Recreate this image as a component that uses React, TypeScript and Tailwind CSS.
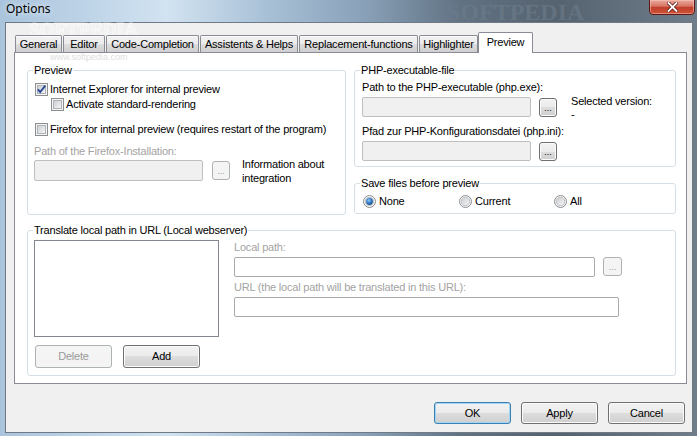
import type { ReactNode } from 'react'

// ── Win7 style controls ─────────────────────────────────────

const UI = "font-['Liberation_Sans',sans-serif] text-[11px] tracking-[-0.2px] leading-[13px]"

function CheckBox({ checked = false }: { checked?: boolean }) {
  return (
    <svg width="13" height="13" viewBox="0 0 13 13" className="shrink-0">
      <defs>
        <linearGradient id="cbFill" x1="0" y1="0" x2="1" y2="1">
          <stop offset="0" stopColor="#c9cdd3" />
          <stop offset="1" stopColor="#f7f7f7" />
        </linearGradient>
      </defs>
      <rect x="0.5" y="0.5" width="12" height="12" fill="#f4f4f4" stroke="#8e8f8f" />
      <rect x="2.5" y="2.5" width="8" height="8" fill="url(#cbFill)" stroke="#b0b4b9" />
      {checked && <path d="M2.8 6.3 L5.2 9 L10.3 2.6" fill="none" stroke="#2c4a94" strokeWidth="1.9" />}
    </svg>
  )
}

function Radio({ selected = false }: { selected?: boolean }) {
  return (
    <svg width="13" height="13" viewBox="0 0 13 13" className="shrink-0">
      <defs>
        <linearGradient id="rbFill" x1="0" y1="0" x2="1" y2="1">
          <stop offset="0" stopColor="#cbcfd4" />
          <stop offset="1" stopColor="#f6f6f6" />
        </linearGradient>
        <radialGradient id="rbDot" cx="0.4" cy="0.35" r="0.7">
          <stop offset="0" stopColor="#8ccaf7" />
          <stop offset="0.6" stopColor="#2d73c0" />
          <stop offset="1" stopColor="#1b4c8a" />
        </radialGradient>
      </defs>
      <circle cx="6.5" cy="6.5" r="6" fill="#f4f4f4" stroke="#8e8f8f" />
      <circle cx="6.5" cy="6.5" r="4.2" fill="url(#rbFill)" stroke="#b4b8bd" strokeWidth="0.8" />
      {selected && <circle cx="6.5" cy="6.5" r="3.4" fill="url(#rbDot)" />}
    </svg>
  )
}

function Btn({ children, className = '', disabled, isDefault }: { children: ReactNode; className?: string; disabled?: boolean; isDefault?: boolean }) {
  if (disabled) {
    return (
      <div className={`flex items-center justify-center rounded-[3px] border border-[#adb2b5] bg-[#f4f4f4] text-[#9a9a9a] ${className}`}>
        {children}
      </div>
    )
  }
  return (
    <div
      className={`flex items-center justify-center rounded-[3px] border bg-[linear-gradient(180deg,#f2f2f2_0%,#ebebeb_50%,#dddddd_50%,#cfcfcf_100%)] text-black ${
        isDefault ? 'border-[#3c7fb1] shadow-[inset_0_0_0_1px_#9fd6f5]' : 'border-[#707070] shadow-[inset_0_0_0_1px_#fbfbfb]'
      } ${className}`}
    >
      {children}
    </div>
  )
}

function Dots({ disabled, className = '' }: { disabled?: boolean; className?: string }) {
  return (
    <Btn disabled={disabled} className={`w-[18px] h-[19px] !items-end pb-[3px] text-[9px] leading-[9px] tracking-normal ${className}`}>
      ...
    </Btn>
  )
}

function Field({ className = '', disabled }: { className?: string; disabled?: boolean }) {
  return (
    <div
      className={`rounded-[2px] border ${disabled ? 'border-[#bfbfbf] bg-[#f0f0f0]' : 'border-[#aaaaaa] bg-white'} ${className}`}
    />
  )
}

function Group({ title, className = '', children }: { title: string; className?: string; children?: ReactNode }) {
  return (
    <div className={`relative rounded-[3px] border border-[#d5dfe5] whitespace-nowrap ${className}`}>
      <span className="absolute left-[5px] top-[-7px] bg-white px-px">{title}</span>
      {children}
    </div>
  )
}

const tabs = [
  { label: 'General', w: 'w-[47px]' },
  { label: 'Editor', w: 'w-[42px]' },
  { label: 'Code-Completion', w: 'w-[93px]' },
  { label: 'Assistents & Helps', w: 'w-[98px]' },
  { label: 'Replacement-functions', w: 'w-[119px]' },
  { label: 'Highlighter', w: 'w-[59px]' },
]

// ── Dialog ──────────────────────────────────────────────────

export default function App() {
  return (
    <div
      className={`relative w-[697px] h-[436px] overflow-hidden flex flex-col text-black bg-[linear-gradient(90deg,#a9c4dc_0%,#bdd3e7_12%,#d2e3f1_24%,#a9c1d7_38%,#8aa2b9_52%,#617283_66%,#55626f_80%,#6f7d8a_100%)] ${UI}`}
    >
      {/* title bar */}
      <div className="h-[22px] flex items-start justify-between shrink-0">
        <span className="ml-[6px] mt-px text-[12px] leading-[16px] tracking-normal font-['Noto_Sans',sans-serif] [text-shadow:0_0_6px_rgba(255,255,255,0.95)]">
          Options
        </span>
        <div className="mr-[2px] -mt-px w-[46px] h-[16px] rounded-b-[4px] border border-[#5e1a12] bg-[linear-gradient(180deg,#e9aa9e_0%,#d67362_45%,#c13f2b_52%,#cc5238_100%)] shadow-[inset_0_0_0_1px_rgba(255,200,190,0.5)] flex items-center justify-center">
          <svg width="11" height="10" viewBox="0 0 11 10">
            <path d="M1.5 1 L9.5 9 M9.5 1 L1.5 9" stroke="#5a1a10" strokeWidth="3.4" strokeLinecap="square" />
            <path d="M1.5 1 L9.5 9 M9.5 1 L1.5 9" stroke="#ffffff" strokeWidth="1.8" strokeLinecap="square" />
          </svg>
        </div>
      </div>

      {/* client area */}
      <div className="flex-1 ml-[5px] mr-[4px] mb-[3px] border border-[#6f7a86] bg-[#f0f0f0] flex flex-col pl-[8px] pt-[9px]">
        {/* tab strip */}
        <div className="relative z-10 flex items-end h-[20px] pl-px gap-px">
          {tabs.map((t) => (
            <div
              key={t.label}
              className={`${t.w} h-[17px] flex items-center justify-center whitespace-nowrap border border-b-0 border-[#898c95] rounded-t-[2px] bg-[linear-gradient(180deg,#f2f2f2_0%,#ebebeb_50%,#dddddd_50%,#cfcfcf_100%)] shadow-[inset_0_1px_0_#fcfcfc]`}
            >
              {t.label}
            </div>
          ))}
          <div className="w-[55px] h-[21px] -ml-px -mb-px flex items-start justify-center pt-[3px] border border-b-0 border-[#898c95] rounded-t-[2px] bg-white">
            Preview
          </div>
        </div>

        {/* tab page */}
        <div className="w-[673px] h-[332px] border border-[#898c95] bg-white pl-[12px] pt-[17px] flex flex-col">
          <div className="flex gap-[8px]">
            <Group title="Preview" className="w-[319px] h-[145px] pl-[7px] pt-[12px]">
              <div className="flex items-center gap-[2px] h-[13px]">
                <CheckBox checked />
                <span>Internet Explorer for internal preview</span>
              </div>
              <div className="flex items-center gap-[2px] h-[13px] mt-[2px] pl-[16px]">
                <CheckBox />
                <span>Activate standard-rendering</span>
              </div>
              <div className="flex items-center gap-[2px] h-[13px] mt-[12px]">
                <CheckBox />
                <span>Firefox for internal preview (requires restart of the program)</span>
              </div>
              <div className="mt-[9px] -ml-px text-[#a3a3a3]">Path of the Firefox-Installation:</div>
              <div className="flex items-start mt-[2px] -ml-px">
                <Field disabled className="w-[169px] h-[21px]" />
                <Dots disabled className="ml-[9px] mt-px" />
                <div className="ml-[12px] -mt-[3px] leading-[14px]">
                  Information about
                  <br />
                  integration
                </div>
              </div>
            </Group>

            <div className="w-[322px] flex flex-col gap-[16px]">
              <Group title="PHP-executable-file" className="h-[97px] pl-[7px] pt-[10px]">
                <div>Path to the PHP-executable (php.exe):</div>
                <div className="flex items-start mt-[3px]">
                  <Field disabled className="w-[169px] h-[20px]" />
                  <Dots className="ml-[8px] mt-px" />
                  <div className="ml-[14px] -mt-[2px]">
                    Selected version:
                    <br />-
                  </div>
                </div>
                <div className="mt-[4px]">Pfad zur PHP-Konfigurationsdatei (php.ini):</div>
                <div className="flex items-start mt-[3px]">
                  <Field disabled className="w-[169px] h-[20px]" />
                  <Dots className="ml-[8px] mt-px" />
                </div>
              </Group>

              <Group title="Save files before preview" className="h-[31px] pl-[8px] pt-[11px]">
                <div className="flex items-center h-[13px]">
                  <div className="w-[96px] flex items-center gap-[3px]">
                    <Radio selected />
                    <span>None</span>
                  </div>
                  <div className="w-[95px] flex items-center gap-[3px]">
                    <Radio />
                    <span>Current</span>
                  </div>
                  <div className="flex items-center gap-[3px]">
                    <Radio />
                    <span>All</span>
                  </div>
                </div>
              </Group>
            </div>
          </div>

          <Group title="Translate local path in URL (Local webserver)" className="mt-[15px] w-[649px] h-[146px] pl-[6px] pt-[9px] flex">
            <div className="w-[185px]">
              <div className="h-[97px] border border-[#828790] bg-white" />
              <div className="flex gap-[11px] mt-[8px] ml-px">
                <Btn disabled className="w-[77px] h-[23px]">
                  Delete
                </Btn>
                <Btn className="w-[77px] h-[23px]">Add</Btn>
              </div>
            </div>
            <div className="ml-[15px] pt-px">
              <div className="text-[#a3a3a3]">Local path:</div>
              <div className="flex items-start mt-[3px]">
                <Field className="w-[361px] h-[20px]" />
                <Dots disabled className="ml-[8px] w-[19px]" />
              </div>
              <div className="mt-[4px] text-[#a3a3a3]">URL (the local path will be translated in this URL):</div>
              <Field className="mt-[3px] w-[385px] h-[20px]" />
            </div>
          </Group>
        </div>

        {/* dialog buttons */}
        <div className="flex justify-end gap-[10px] mt-[18px] pr-[7px]">
          <Btn isDefault className="w-[77px] h-[22px]">
            OK
          </Btn>
          <Btn className="w-[77px] h-[22px]">Apply</Btn>
          <Btn className="w-[77px] h-[22px]">Cancel</Btn>
        </div>
      </div>

      {/* softpedia watermarks */}
      <span className="pointer-events-none absolute left-[29px] top-[24px] text-[19px] leading-[12px] tracking-normal font-bold font-['Liberation_Serif',serif] text-white/10 [-webkit-text-stroke:1px_rgba(255,255,255,0.55)]">
        SOFTPEDIA
      </span>
      <span className="pointer-events-none absolute left-[50px] top-[52px] text-[9px] leading-[10px] tracking-normal font-['Liberation_Sans',sans-serif] text-[#dedede]">
        www.softpedia.com
      </span>
      <span className="pointer-events-none absolute left-[447px] top-0 text-[24px] leading-[24px] tracking-normal font-bold font-['Liberation_Serif',serif] text-[#6d7d8c]/60">
        SOFTPEDIA
      </span>
    </div>
  )
}
